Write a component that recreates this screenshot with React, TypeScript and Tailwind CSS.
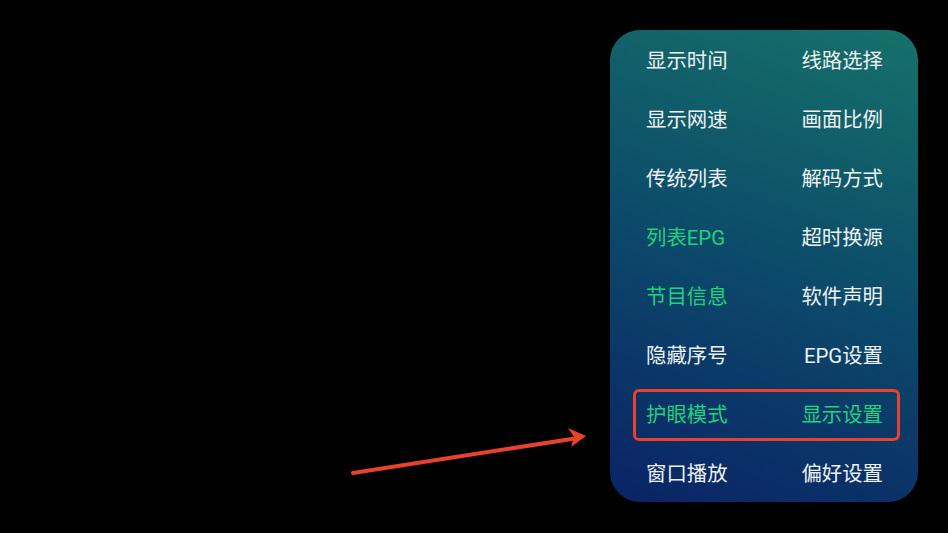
import React from "react";

type Item = { label: string; on?: boolean };

const rows: [Item, Item][] = [
  [{ label: "显示时间" }, { label: "线路选择" }],
  [{ label: "显示网速" }, { label: "画面比例" }],
  [{ label: "传统列表" }, { label: "解码方式" }],
  [{ label: "列表EPG", on: true }, { label: "超时换源" }],
  [{ label: "节目信息", on: true }, { label: "软件声明" }],
  [{ label: "隐藏序号" }, { label: "EPG设置" }],
  [{ label: "护眼模式", on: true }, { label: "显示设置", on: true }],
  [{ label: "窗口播放" }, { label: "偏好设置" }],
];

function Label({ item }: { item: Item }) {
  return (
    <span className={item.on ? "text-[#1fd27c]" : "text-[#eef1f3]"}>
      {item.label}
    </span>
  );
}

// annotation arrow pointing at the highlighted row
function Arrow() {
  return (
    <svg className="absolute inset-0 pointer-events-none" width="948" height="533">
      <line x1="353" y1="473" x2="578" y2="438" stroke="#e8412c" strokeWidth="4" strokeLinecap="round" />
      <path d="M586 436 L568 428 L574 437 L571 447 Z" fill="#e8412c" />
    </svg>
  );
}

export default function App() {
  return (
    <div
      className="relative w-[948px] h-[533px] bg-black pt-[30px] pl-[610px]"
      style={{ fontFamily: 'Roboto, "Noto Sans CJK SC", sans-serif' }}
    >
      <div className="w-[308px] h-[472px] rounded-[30px] bg-linear-[20deg] from-[#0a2366] via-[#0c4a6a] to-[#167169] flex flex-col">
        {rows.map(([l, r], i) => (
          <div key={i} className="relative h-[59px] flex items-center justify-between pl-[36px] pr-[35px] pt-[4px] text-[20.4px] leading-none">
            <Label item={l} />
            <Label item={r} />
            {i === 6 && (
              <div className="absolute left-[23px] right-[18px] top-[5px] bottom-[2px] border-[3px] border-[#e8412c] rounded-[6px]" />
            )}
          </div>
        ))}
      </div>
      <Arrow />
    </div>
  );
}
